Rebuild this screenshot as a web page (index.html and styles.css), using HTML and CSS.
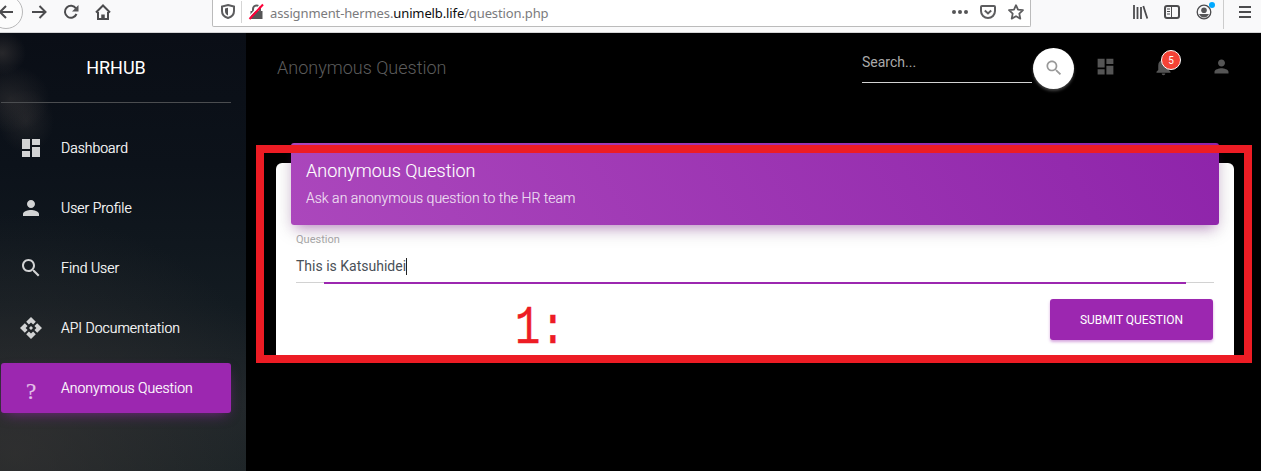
FILE: index.html
```html
<!DOCTYPE html>
<html lang="en">
<head>
<meta charset="utf-8">
<title>Anonymous Question</title>
<link rel="stylesheet" href="styles.css">
</head>
<body>
<svg class="defs" width="0" height="0">
  <symbol id="dashboard" viewBox="0 0 24 24"><path d="M3 13h8V3H3v10zm0 8h8v-6H3v6zm10 0h8V11h-8v10zm0-18v6h8V3h-8z"/></symbol>
  <symbol id="person" viewBox="0 0 24 24"><path d="M12 12c2.21 0 4-1.79 4-4s-1.790-4-4-4-4 1.790-4 4 1.790 4 4 4zm0 2c-2.670 0-8 1.340-8 4v2h16v-2c0-2.660-5.330-4-8-4z"/></symbol>
  <symbol id="search" viewBox="0 0 24 24"><path d="M15.500 14h-.79l-.28-.27C15.410 12.590 16 11.110 16 9.500 16 5.910 13.090 3 9.500 3S3 5.910 3 9.500 5.910 16 9.500 16c1.610 0 3.090-.59 4.230-1.570l.27.28v.79l5 4.990L20.490 19l-4.990-5zm-6 0C7.010 14 5 11.990 5 9.500S7.010 5 9.500 5 14 7.010 14 9.500 11.990 14 9.500 14z"/></symbol>
  <symbol id="bell" viewBox="0 0 24 24"><path d="M12 22c1.100 0 2-.9 2-2h-4c0 1.100.89 2 2 2zm6-6v-5c0-3.070-1.640-5.640-4.500-6.320V4c0-.83-.67-1.500-1.500-1.500s-1.500.67-1.500 1.500v.68C7.630 5.360 6 7.920 6 11v5l-2 2v1h16v-1l-2-2z"/></symbol>
  <symbol id="api" viewBox="0 0 24 24"><path d="M14 12l-2 2-2-2 2-2zM12 6.600l2.100 2 2.700-2.800L12 1 7.200 5.800l2.700 2.800zM6.600 12l2-2.100-2.800-2.700L1 12l4.800 4.800 2.800-2.700zM17.400 12l-2-2.100 2.800-2.700L23 12l-4.800 4.800-2.800-2.700zM12 17.400l-2.100-2-2.700 2.800L12 23l4.800-4.800-2.700-2.800z"/></symbol>
</svg>

<header class="browser">
  <div class="nav-buttons">
    <span class="back"><svg width="16" height="16" viewBox="0 0 16 16"><path d="M15 8H2M8 2L2 8l6 6"/></svg></span>
    <svg width="16" height="16" viewBox="0 0 16 16"><path d="M1 8h13M8.500 2l6 6-6 6"/></svg>
    <svg width="16" height="16" viewBox="0 0 16 16"><path d="M13 4.500A6 6 0 1 0 13.500 10"/><path class="solid" d="M15.500 1v6.500H9z"/></svg>
    <svg width="16" height="16" viewBox="0 0 16 16"><path d="M1 8.500L8 1.500l7 7M3 8v7h10V8"/><path d="M8 15v-4.500" stroke-width="3.500"/></svg>
  </div>
  <div class="url-bar">
    <svg class="shield" width="14" height="15" viewBox="0 0 14 15"><path d="M7 1L13 2.500V7c0 3.500-2.500 6-6 7-3.500-1-6-3.500-6-7V2.500z"/><path class="solid" d="M7 3.800L4 4.500V7c0 2 1 3.500 3 4.500z"/></svg>
    <span class="divider"></span>
    <svg class="lock" width="15" height="16" viewBox="0 0 15 16"><path class="solid" d="M1.500 7h12v8h-12z"/><path d="M4 8V5a3.500 3.500 0 0 1 7 0v3"/><path d="M-.5 13.500L12 0" stroke="#fff" stroke-width="1.500"/><path d="M.5 15L14 .5" stroke="#ff0039" stroke-width="2"/></svg>
    <span class="url">assignment-hermes.<b>unimelb.life</b>/question.php</span>
    <div class="url-actions">
      <svg width="16" height="16" viewBox="0 0 16 16"><g class="solid"><circle cx="2" cy="8" r="2"/><circle cx="8" cy="8" r="2"/><circle cx="14" cy="8" r="2"/></g></svg>
      <svg width="16" height="16" viewBox="0 0 16 16"><path d="M2 2h12q1 0 1 1v4a7 7 0 0 1-14 0V3q0-1 1-1z"/><path d="M4.800 6.500L8 9.500l3.200-3"/></svg>
      <svg width="16" height="16" viewBox="0 0 16 16"><path stroke-width="1.800" stroke-linejoin="round" d="M8 1.200l2 4.500 5 .5-3.700 3.400 1 5L8 12.200l-4.300 2.400 1-5L1 6.200l5-.5z"/></svg>
    </div>
  </div>
  <div class="tools">
    <svg width="16" height="16" viewBox="0 0 16 16"><path d="M2 1v14M5.500 3v12M9 3v12M11.300 2l4 12.500" stroke-width="1.800"/></svg>
    <svg width="16" height="16" viewBox="0 0 16 16"><rect x="1" y="2" width="14" height="12" rx="2"/><path d="M7.500 2v12M3 5h3M3 7.500h3M3 10h3" stroke-width="1"/></svg>
    <span class="account"><svg width="16" height="16" viewBox="0 0 16 16"><circle cx="8" cy="8" r="6.800" stroke-width="1.300"/><circle class="solid" cx="8" cy="6.200" r="2.800"/><path class="solid" d="M3 10h10q-2 3.500-5 3.500T3 10z"/></svg><i class="dot"></i></span>
    <span class="tool-divider"></span>
    <svg width="14" height="16" viewBox="0 0 14 16"><path d="M1 3h12M1 8h12M1 13h12" /></svg>
  </div>
</header>

<div class="app">
  <aside class="sidebar">
    <div class="brand">HRHUB</div>
    <nav class="menu">
      <a class="item"><svg class="icon"><use href="#dashboard"/></svg>Dashboard</a>
      <a class="item"><svg class="icon"><use href="#person"/></svg>User Profile</a>
      <a class="item"><svg class="icon"><use href="#search"/></svg>Find User</a>
      <a class="item"><svg class="icon"><use href="#api"/></svg>API Documentation</a>
      <a class="item active"><span class="icon question">?</span>Anonymous Question</a>
    </nav>
  </aside>
  <main class="main">
    <div class="navbar">
      <h1 class="title">Anonymous Question</h1>
      <div class="search-field">Search...</div>
      <span class="search-button"><svg><use href="#search"/></svg></span>
      <div class="nav-icons">
        <svg><use href="#dashboard"/></svg>
        <span class="notifications"><svg><use href="#bell"/></svg><span class="badge">5</span></span>
        <svg><use href="#person"/></svg>
      </div>
    </div>
    <section class="card">
      <div class="card-header">
        <h2>Anonymous Question</h2>
        <p>Ask an anonymous question to the HR team</p>
      </div>
      <div class="card-body">
        <div class="label">Question</div>
        <div class="input"><span>This is Katsuhidei</span><i class="caret"></i></div>
        <div class="underline"></div>
        <div class="submit">SUBMIT QUESTION</div>
      </div>
    </section>
    <div class="frame"></div>
    <div class="mark">1:</div>
  </main>
</div>
</body>
</html>
```
FILE: styles.css
```css
* { box-sizing: border-box; }
body { margin: 0; width: 1261px; height: 471px; overflow: hidden; background: #000; font-family: Roboto, "Liberation Sans", sans-serif; font-size: 14px; }
svg { display: block; flex: none; }
h1, h2, p { margin: 0; }
.defs { position: absolute; }

/* Browser toolbar */
.browser { display: flex; height: 33px; background: #f9f9fa; border-bottom: 1px solid #d4d4d6; overflow: hidden; }
.browser svg { fill: none; stroke: #4c4c4e; stroke-width: 2; overflow: visible; }
.browser .solid { fill: #555557; stroke: none; }
.nav-buttons { display: flex; width: 212px; height: 24px; align-items: center; gap: 16px; }
.back { display: flex; flex: none; width: 34px; height: 34px; margin: 0 -8px 0 -11px; border: 1px solid #b8b8b9; border-radius: 50%; background: #fcfcfc; align-items: center; justify-content: center; }
.url-bar { display: flex; width: 819px; height: 27px; padding: 0 6px 3px 8px; background: #fff; border: 1px solid #bbb; border-top: 0; border-radius: 0 0 2px 2px; align-items: center; }
.url-bar svg { stroke: #5d5d5f; }
.divider { width: 1px; height: 22px; margin: 0 7px 0 6px; background: #d5d5d5; }
.url { margin: 2px 0 0 6px; font: 13px "Noto Sans", sans-serif; letter-spacing: -.12px; color: #7b7b7d; white-space: nowrap; }
.url b { font-weight: 400; color: #0c0c0d; }
.url-actions { display: flex; gap: 12px; margin-left: auto; }
.tools { display: flex; flex: 1; height: 24px; margin-left: 101px; align-items: center; }
.tools > * { flex: none; }
.tools > svg + svg, .account { margin-left: 16px; }
.account { position: relative; }
.dot { position: absolute; right: -3px; top: -2px; width: 6px; height: 6px; border-radius: 50%; background: #00a9ff; }
.tool-divider { width: 1px; height: 33px; margin: 0 14px 0 11px; background: #ccc; }

.app { display: flex; height: 438px; }

/* Sidebar */
.sidebar { width: 246px; padding: 0 15px 0 1px; color: #fff; background:
  radial-gradient(ellipse 24px 22px at 2px 20px, rgba(75,70,68,.45), transparent),
  radial-gradient(ellipse 40px 34px at 10px 66px, rgba(75,70,68,.35), transparent),
  radial-gradient(ellipse 28px 32px at 26px 88px, rgba(75,70,68,.3), transparent),
  radial-gradient(ellipse 280px 240px at 15px 420px, rgba(58,54,53,.6), transparent),
  linear-gradient(#0a0e16 0%, #0c121a 30%, #131b21 62%, #20262a 85%, #1b2326 100%); }
.brand { height: 70px; border-bottom: 1px solid #4b4d50; font-size: 18px; line-height: 70px; text-align: center; }
.menu { display: flex; flex-direction: column; gap: 10px; padding-top: 20px; }
.item { display: flex; height: 50px; padding-left: 18px; gap: 18px; align-items: center; border-radius: 3px; font-size: 14px; font-weight: 300; -webkit-text-stroke: .2px; }
.icon { width: 24px; height: 24px; fill: #d2d3d4; }
.active { background: #9c27b0; box-shadow: 0 5px 14px -5px rgba(156,39,176,.7); }
.question { padding-top: 2px; font: 23px/28px "Liberation Serif", serif; color: #e4c2e9; text-align: center; }

/* Page header */
.main { position: relative; flex: 1; padding: 0 27px 0 30px; }
.navbar { display: flex; height: 70px; margin-bottom: 60px; align-items: center; }
.title { flex: 1; padding: 0 0 2px 1px; color: #5c5c5c; font-size: 18px; font-weight: 300; }
.search-field { width: 170px; height: 31px; margin: -1px 1px 0 0; padding-top: 2px; border-bottom: 1px solid #d2d2d2; color: #aaa; line-height: 16px; }
.search-button { display: flex; width: 41px; height: 41px; border-radius: 50%; background: #fff; box-shadow: 0 2px 3px #444; align-items: center; justify-content: center; }
.search-button svg { width: 20px; height: 20px; fill: #999; }
.nav-icons { display: flex; gap: 37px; margin: -3px 2px 0 21px; }
.nav-icons svg { width: 21px; height: 21px; fill: #555; }
.notifications { position: relative; }
.badge { position: absolute; left: 8px; top: -6px; width: 20px; height: 20px; border: 1px solid #fff; border-radius: 50%; background: #f44336; color: #fff; font-size: 10px; line-height: 19px; text-align: center; }

/* Question form */
.card { height: 194px; padding: 0 15px; border-radius: 6px 6px 0 0; background: #fff; }
.card-header { position: relative; top: -20px; height: 82px; padding: 17px 15px; border-radius: 3px; background: linear-gradient(60deg, #ab47bc, #8e24aa); color: #fff; box-shadow: 0 5px 20px rgba(0,0,0,.14), 0 7px 12px -5px rgba(156,39,176,.46); }
.card-header h2 { font-size: 18px; font-weight: 300; line-height: 22px; -webkit-text-stroke: .1px; }
.card-header p { margin-top: 6px; color: rgba(255,255,255,.75); font-weight: 300; line-height: 20px; -webkit-text-stroke: .2px; }
.card-body { display: flex; flex-direction: column; margin-top: -12px; padding: 0 5px; }
.label { color: #aaa; font-size: 11px; line-height: 13px; }
.input { display: flex; height: 36px; padding-top: 4px; align-items: center; color: #495057; }
.caret { width: 1px; height: 17px; background: #222; }
.underline { height: 2px; background: linear-gradient(#9c27b0, #9c27b0) 28px 0 / 862px 2px no-repeat, linear-gradient(#d2d2d2, #d2d2d2) 0 0 / 100% 1px no-repeat; }
.submit { align-self: flex-end; width: 163px; height: 41px; margin: 15px 1px 0 0; border-radius: 3px; background: #9c27b0; box-shadow: 0 2px 3px rgba(156,39,176,.4); color: #fff; font-size: 12px; line-height: 42px; text-align: center; }

/* Annotation drawn over the page */
.frame { position: absolute; left: 10px; top: 112px; width: 996px; height: 218px; border: 8px solid #ed1c24; }
.mark { position: absolute; left: 269px; top: 266px; color: #ed1c24; font: 54px/60px "Liberation Mono", monospace; transform: scaleX(.78); transform-origin: left; -webkit-text-stroke: .5px; }
```
